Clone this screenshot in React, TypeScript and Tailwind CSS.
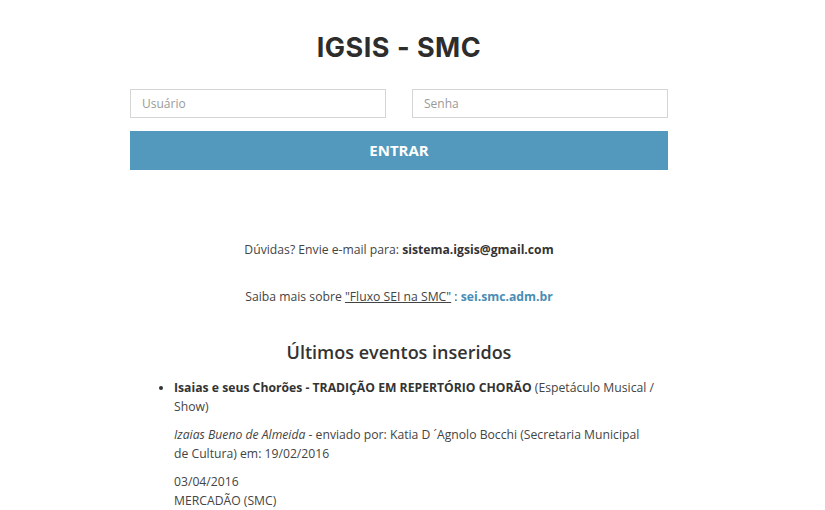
import React from "react";

export default function App() {
  return (
    <div className="min-h-[510px] w-full bg-white text-[#444] [font-family:'Open_Sans',sans-serif]">
      <div className="ml-[130px] w-[538px] pt-[30px]">
        <h1 className="text-center text-[27px] font-bold leading-[36px] tracking-[0.5px] text-[#2d2d2d] [font-family:Inter,sans-serif]">
          IGSIS - SMC
        </h1>
        <div className="mt-[23px] flex justify-between">
          <input
            placeholder="Usuário"
            className="h-[29px] w-[256px] border border-[#d5d5d5] px-[11px] text-[12px] text-[#555] placeholder:text-[#9a9a9a] outline-none"
          />
          <input
            placeholder="Senha"
            className="h-[29px] w-[256px] border border-[#d5d5d5] px-[11px] text-[12px] text-[#555] placeholder:text-[#9a9a9a] outline-none"
          />
        </div>
        <button className="mt-[13px] h-[39px] w-full bg-[#5299bd] text-[15px] font-bold text-white">
          ENTRAR
        </button>
        <p className="mt-[70px] text-center text-[12.2px] leading-[19px]">
          Dúvidas? Envie e-mail para: <b className="text-[#333]">sistema.igsis@gmail.com</b>
        </p>
        <p className="mt-[28px] text-center text-[12.2px] leading-[19px]">
          Saiba mais sobre <span className="underline">"Fluxo SEI na SMC"</span> :{" "}
          <b className="text-[#4a8db5]">sei.smc.adm.br</b>
        </p>
        <h2 className="mt-[34px] text-center text-[18px] font-semibold leading-[24px] text-[#333]">
          Últimos eventos inseridos
        </h2>
        <ul className="mt-[15px] ml-[44px] mr-[12px] list-disc text-[12.2px] leading-[18.5px] marker:text-[#333]">
          <li>
            <p>
              <b className="text-[#333]">Isaias e seus Chorões - TRADIÇÃO EM REPERTÓRIO CHORÃO</b> (Espetáculo Musical / Show)
            </p>
            <p className="mt-[10px]">
              <i>Izaias Bueno de Almeida</i> - enviado por: Katia D ´Agnolo Bocchi (Secretaria Municipal de Cultura) em: 19/02/2016
            </p>
            <p className="mt-[10px]">
              03/04/2016
              <br />
              MERCADÃO (SMC)
            </p>
          </li>
        </ul>
      </div>
    </div>
  );
}
